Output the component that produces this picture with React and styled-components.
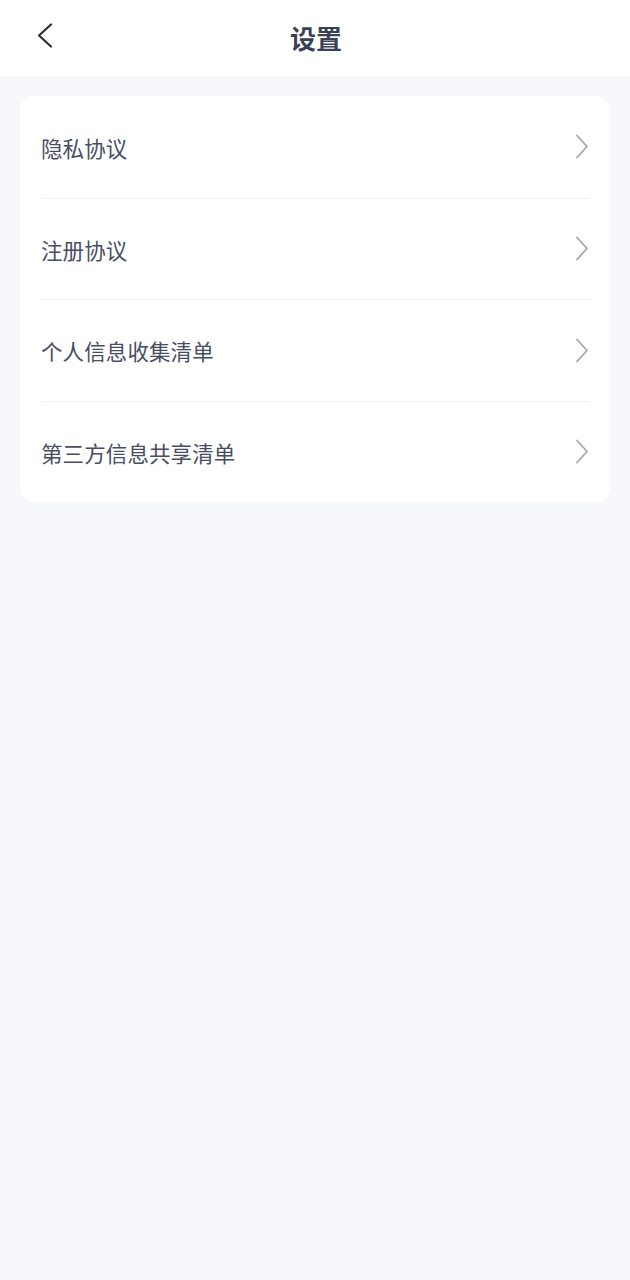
import React from "react";
import styled, { createGlobalStyle } from "styled-components";

const Global = createGlobalStyle`
  html, body { margin: 0; padding: 0; background: #f7f8fc; }
  body { font-family: "Noto Sans CJK SC", "Noto Sans", sans-serif; }
  #root { min-height: 1280px; background: #f7f8fc; }
`;

const Header = styled.header`
  height: 76px;
  background: #ffffff;
  display: grid;
  grid-template-columns: 76px 1fr 76px;
  align-items: center;
`;

const Back = styled.button`
  border: 0;
  background: none;
  padding: 0;
  width: 76px;
  height: 76px;
  display: flex;
  align-items: center;
  justify-content: flex-start;
  padding-left: 36px;
  padding-bottom: 4px;
  box-sizing: border-box;
`;

const Title = styled.h1`
  margin: 0;
  text-align: center;
  font-size: 26px;
  font-weight: 700;
  color: #3a4157;
  line-height: 1;
  padding-bottom: 0;
  padding-left: 2px;
`;

const Main = styled.main`
  padding: 20px 20px;
`;

const Card = styled.div`
  background: #ffffff;
  border-radius: 14px;
  padding: 0 20px 0 21px;
`;

const Row = styled.div`
  height: 101.5px;
  display: flex;
  align-items: center;
  justify-content: space-between;
  box-sizing: border-box;
  border-top: ${(p) => (p.$first ? "none" : "1px solid #eeeff3")};
  padding-top: 1px;
`;

const Label = styled.span`
  font-size: 21.5px;
  color: #474d63;
  letter-spacing: 0.1px;
`;

const Chevron = () => (
  <svg width="16" height="26" viewBox="0 0 16 26" fill="none">
    <path d="M3 1.5 L13 12.5 L3 23.5" stroke="#a3a6ae" strokeWidth="1.8" strokeLinecap="round" strokeLinejoin="round" />
  </svg>
);

const items = ["隐私协议", "注册协议", "个人信息收集清单", "第三方信息共享清单"];

export default function App() {
  return (
    <>
      <Global />
      <Header>
        <Back aria-label="返回">
          <svg width="18" height="26" viewBox="0 0 18 26" fill="none">
            <path d="M15 1.5 L3 12.5 L15 23.5" stroke="#2b2f3a" strokeWidth="2.2" strokeLinecap="round" strokeLinejoin="round" />
          </svg>
        </Back>
        <Title>设置</Title>
        <div />
      </Header>
      <Main>
        <Card>
          {items.map((t, i) => (
            <Row key={t} $first={i === 0}>
              <Label>{t}</Label>
              <Chevron />
            </Row>
          ))}
        </Card>
      </Main>
    </>
  );
}
